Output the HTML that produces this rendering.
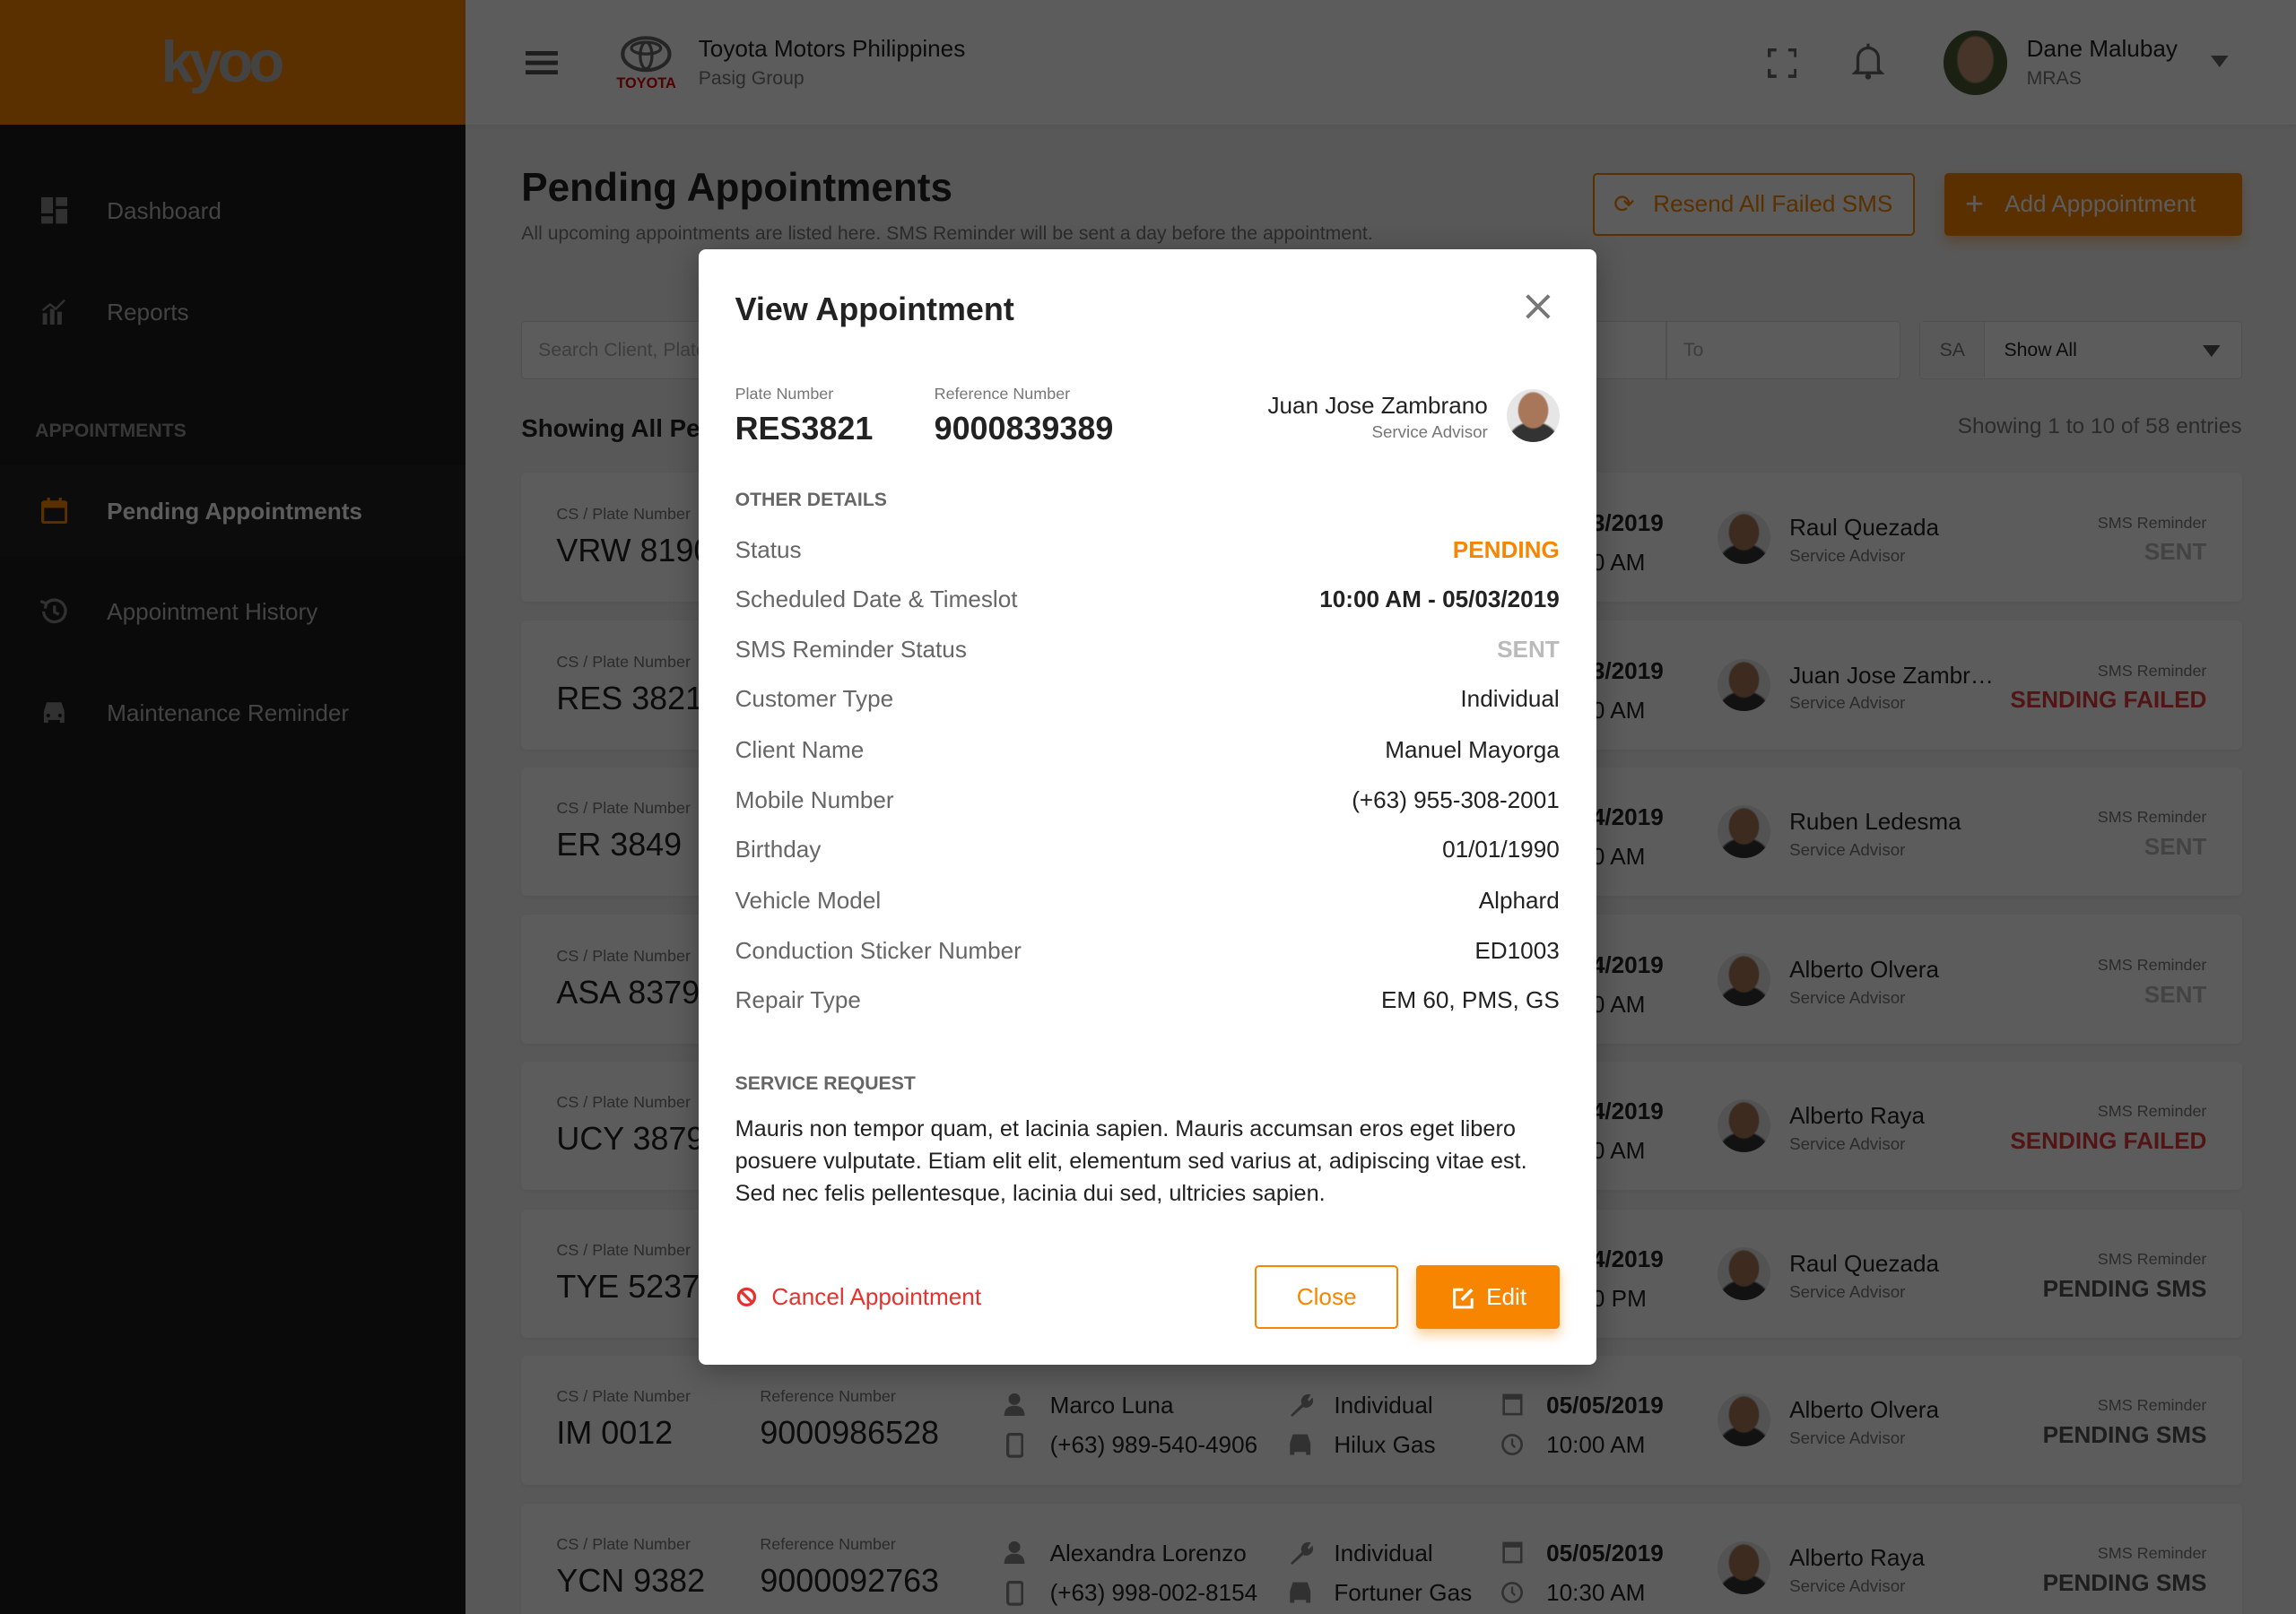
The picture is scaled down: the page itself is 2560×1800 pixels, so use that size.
<!DOCTYPE html>
<html><head><meta charset="utf-8">
<style>
*{margin:0;padding:0;box-sizing:border-box}
html,body{width:2560px;height:1800px;overflow:hidden;background:#f4f4f4}
#root{position:relative;width:1568px;height:1103px;zoom:1.63265;font-family:"Liberation Sans",sans-serif;color:#222;overflow:hidden;background:#f4f4f4}
.a{position:absolute;white-space:nowrap;line-height:1}
.side{position:absolute;left:0;top:0;width:318px;height:1103px;background:#1c1c1c}
.brand{position:absolute;left:0;top:0;width:318px;height:85px;background:#f88500}
.top{position:absolute;left:318px;top:0;width:1250px;height:85px;background:#fff;box-shadow:0 1px 3px rgba(0,0,0,.08)}
.card{position:absolute;left:356px;width:1175px;height:88px;background:#fff;border-radius:4px;box-shadow:0 1px 3px rgba(0,0,0,.06)}
.lbl{font-size:11px;color:#777}
.plate{font-size:22px;color:#222}
.av{position:absolute;border-radius:50%;background:radial-gradient(ellipse 30% 36% at 50% 40%,#a8775a 0 90%,transparent 100%),radial-gradient(ellipse 50% 40% at 50% 100%,#333 0 90%,transparent 100%),#e6e6e6}
.ov{position:absolute;left:0;top:0;width:1568px;height:1103px;background:rgba(0,0,0,.64)}
.modal{position:absolute;left:477px;top:170px;width:613px;height:762px;background:#fff;border-radius:5px;box-shadow:0 4px 20px rgba(0,0,0,.3)}
.row{position:absolute;left:25px;width:563px;height:20px;font-size:16px}
.row .l{position:absolute;left:0;color:#666}
.row .v{position:absolute;right:0;color:#222}
.box{position:absolute;border:1px solid #ddd;border-radius:3px;background:#fff;height:40px;top:219px}
</style></head><body><div id="root">

<div class="side">
 <div class="brand"><div class="a" style="left:110px;top:22px;font-size:40px;font-weight:bold;color:#bbb;letter-spacing:-3px">kyoo</div></div>
 <svg class="a" style="left:28px;top:135px" width="18" height="18"><rect x="0" y="0" width="8" height="11" fill="#888"/><rect x="10" y="0" width="8" height="6" fill="#888"/><rect x="10" y="8" width="8" height="10" fill="#888"/><rect x="0" y="13" width="8" height="5" fill="#888"/></svg>
 <div class="a" style="left:73px;top:136px;font-size:16px;color:#bbb">Dashboard</div>
 <svg class="a" style="left:28px;top:204px" width="18" height="18"><rect x="1" y="10" width="3" height="8" fill="#888"/><rect x="6" y="7" width="3" height="11" fill="#888"/><rect x="11" y="9" width="3" height="9" fill="#888"/><path d="M1 8 L6 4 L10 7 L16 1" stroke="#888" stroke-width="1.5" fill="none"/></svg>
 <div class="a" style="left:73px;top:205px;font-size:16px;color:#bbb">Reports</div>
 <div class="a" style="left:24px;top:288px;font-size:13px;color:#999;font-weight:bold">APPOINTMENTS</div>
 <div class="a" style="left:0;top:318px;width:318px;height:62px;background:#222"></div>
 <svg class="a" style="left:28px;top:340px" width="18" height="18"><rect x="1" y="3" width="16" height="14" rx="1" fill="none" stroke="#f88500" stroke-width="2"/><rect x="1" y="3" width="16" height="4" fill="#f88500"/><rect x="4" y="0" width="2" height="4" fill="#f88500"/><rect x="12" y="0" width="2" height="4" fill="#f88500"/></svg>
 <div class="a" style="left:73px;top:341px;font-size:16px;color:#fff;font-weight:bold">Pending Appointments</div>
 <svg class="a" style="left:26px;top:407px" width="22" height="22"><path d="M4 11 A7.5 7.5 0 1 0 6 5.5" stroke="#888" stroke-width="2" fill="none"/><path d="M2 4 L6 5.5 L5 9" stroke="#888" stroke-width="2" fill="none"/><path d="M11.5 7 V11.5 L14.5 13" stroke="#888" stroke-width="2" fill="none"/></svg>
 <div class="a" style="left:73px;top:410px;font-size:16px;color:#bbb">Appointment History</div>
 <svg class="a" style="left:27px;top:478px" width="20" height="18"><path d="M3 8 L5 2 H15 L17 8 V16 H14 V14 H6 V16 H3 Z" fill="#888"/><circle cx="6" cy="11" r="1.3" fill="#1c1c1c"/><circle cx="14" cy="11" r="1.3" fill="#1c1c1c"/></svg>
 <div class="a" style="left:73px;top:479px;font-size:16px;color:#bbb">Maintenance Reminder</div>
</div>

<div class="top">
 <svg class="a" style="left:41px;top:35px" width="22" height="16"><rect y="0" width="22" height="3" fill="#555"/><rect y="6.5" width="22" height="3" fill="#555"/><rect y="13" width="22" height="3" fill="#555"/></svg>
 <svg class="a" style="left:105px;top:24px" width="36" height="26"><ellipse cx="18" cy="13" rx="16" ry="11" fill="none" stroke="#666" stroke-width="2.5"/><ellipse cx="18" cy="9" rx="10" ry="4" fill="none" stroke="#666" stroke-width="2"/><ellipse cx="18" cy="14" rx="4" ry="9" fill="none" stroke="#666" stroke-width="2"/></svg>
 <div class="a" style="left:103px;top:52px;font-size:10px;font-weight:bold;color:#d00">TOYOTA</div>
 <div class="a" style="left:159px;top:25px;font-size:16px;color:#222">Toyota Motors Philippines</div>
 <div class="a" style="left:159px;top:47px;font-size:13px;color:#777">Pasig Group</div>
 <svg class="a" style="left:889px;top:33px" width="20" height="20"><path d="M1 6V1H6M14 1H19V6M19 14V19H14M6 19H1V14" stroke="#666" stroke-width="2.2" fill="none"/></svg>
 <svg class="a" style="left:947px;top:29px" width="22" height="26"><path d="M4 19 V11 A7 7 0 0 1 18 11 V19 L20 21 H2 Z" fill="none" stroke="#666" stroke-width="2"/><circle cx="11" cy="23.5" r="2" fill="#666"/><rect x="10" y="1" width="2" height="3" fill="#666"/></svg>
 <div class="av" style="left:1009px;top:21px;width:44px;height:44px;background:radial-gradient(ellipse 30% 38% at 50% 45%,#c79476 0 90%,transparent 100%),#4a5a34"></div>
 <div class="a" style="left:1066px;top:25px;font-size:16px;color:#222">Dane Malubay</div>
 <div class="a" style="left:1066px;top:47px;font-size:13px;color:#777">MRAS</div>
 <svg class="a" style="left:1192px;top:38px" width="12" height="8"><path d="M0 0H12L6 8Z" fill="#666"/></svg>
</div>

<div class="a" style="left:356px;top:115px;font-size:27px;font-weight:bold;color:#222">Pending Appointments</div>
<div class="a" style="left:356px;top:153px;font-size:13px;color:#777">All upcoming appointments are listed here. SMS Reminder will be sent a day before the appointment.</div>
<div class="a" style="left:1088px;top:118px;width:220px;height:43px;border:1.5px solid #f88500;border-radius:3px;background:#fff"></div>
<div class="a" style="left:1102px;top:131px;font-size:17px;color:#f88500">⟳</div>
<div class="a" style="left:1129px;top:131px;font-size:16px;color:#f88500">Resend All Failed SMS</div>
<div class="a" style="left:1328px;top:118px;width:203px;height:43px;background:#f88500;border-radius:3px;box-shadow:0 4px 8px rgba(248,133,0,.4)"></div>
<div class="a" style="left:1342px;top:128px;font-size:22px;color:#fff">+</div>
<div class="a" style="left:1369px;top:131px;font-size:16px;color:#fff">Add Apppointment</div>

<div class="box" style="left:356px;width:320px"><div class="a" style="left:11px;top:13px;font-size:13px;color:#aaa">Search Client, Plate</div></div>
<div class="box" style="left:920px;width:378px"><div class="a" style="left:217px;top:0;width:1px;height:40px;background:#ddd"></div><div class="a" style="left:229px;top:13px;font-size:13px;color:#aaa">To</div></div>
<div class="box" style="left:1311px;width:220px;background:#fff"><div class="a" style="left:0;top:0;width:44px;height:38px;background:#f7f7f7;border-right:1px solid #ddd"></div><div class="a" style="left:13px;top:13px;font-size:13px;color:#777">SA</div><div class="a" style="left:57px;top:13px;font-size:13px;color:#222">Show All</div><svg class="a" style="left:193px;top:16px" width="12" height="8"><path d="M0 0H12L6 8Z" fill="#555"/></svg></div>
<div class="a" style="left:356px;top:284px;font-size:17px;font-weight:bold;color:#222">Showing All Pending Appointments</div>
<div class="a" style="left:1250px;top:284px;width:281px;text-align:right;font-size:15px;color:#777">Showing 1 to 10 of 58 entries</div>

<div id="cards"></div>
<script>
var d=[["VRW 8190","9000839382","Raul Quezada","SENT","#bbb","05/03/2019","10:00 AM"],
["RES 3821","9000839389","Juan Jose Zambr…","SENDING FAILED","#e03a3a","05/03/2019","10:00 AM"],
["ER 3849","9000839390","Ruben Ledesma","SENT","#bbb","05/04/2019","10:00 AM"],
["ASA 8379","9000839391","Alberto Olvera","SENT","#bbb","05/04/2019","10:00 AM"],
["UCY 3879","9000839392","Alberto Raya","SENDING FAILED","#e03a3a","05/04/2019","10:00 AM"],
["TYE 5237","9000839393","Raul Quezada","PENDING SMS","#555","05/04/2019","01:00 PM"],
["IM 0012","9000986528","Alberto Olvera","PENDING SMS","#555","05/05/2019","10:00 AM","Marco Luna","(+63) 989-540-4906","Hilux Gas"],
["YCN 9382","9000092763","Alberto Raya","PENDING SMS","#555","05/05/2019","10:30 AM","Alexandra Lorenzo","(+63) 998-002-8154","Fortuner Gas"]];
var h="",tops=[323,424,524,625,725,826,926,1027];
d.forEach(function(r,i){var t=tops[i];
h+='<div class="card" style="top:'+t+'px">'+
'<div class="a lbl" style="left:24px;top:23px">CS / Plate Number</div>'+
'<div class="a plate" style="left:24px;top:42px">'+r[0]+'</div>'+
'<div class="a lbl" style="left:163px;top:23px">Reference Number</div>'+
'<div class="a plate" style="left:163px;top:42px">'+r[1]+'</div>'+
'<svg class="a" style="left:329px;top:25px" width="16" height="16"><circle cx="8" cy="4.5" r="4" fill="#888"/><path d="M1 16 Q1 9 8 9 Q15 9 15 16Z" fill="#888"/></svg>'+
'<div class="a" style="left:361px;top:26px;font-size:16px">'+(r[7]||"Manuel Mayorga")+'</div>'+
'<svg class="a" style="left:331px;top:53px" width="12" height="17"><rect x="1" y="1" width="10" height="15" rx="1.5" fill="none" stroke="#888" stroke-width="2"/></svg>'+
'<div class="a" style="left:361px;top:53px;font-size:16px">'+(r[8]||"(+63) 955-308-2001")+'</div>'+
'<svg class="a" style="left:523px;top:25px" width="18" height="18"><path d="M3 16 L11 8 A4 4 0 0 1 15 2 L13 5 L15 7 L17 5 A4 4 0 0 1 11 9 Z" fill="#888" stroke="#888" stroke-width="1.5"/></svg>'+
'<div class="a" style="left:555px;top:26px;font-size:16px">Individual</div>'+
'<svg class="a" style="left:523px;top:53px" width="18" height="16"><path d="M2 7 L4 1 H14 L16 7 V15 H13 V13 H5 V15 H2 Z" fill="#888"/></svg>'+
'<div class="a" style="left:555px;top:53px;font-size:16px">'+(r[9]||"Alphard")+'</div>'+
'<svg class="a" style="left:670px;top:24px" width="14" height="17"><rect x="1" y="3" width="12" height="13" fill="none" stroke="#888" stroke-width="1.6"/><rect x="1" y="3" width="12" height="3" fill="#888"/></svg>'+
'<div class="a" style="left:700px;top:26px;font-size:16px;font-weight:bold">'+r[5]+'</div>'+
'<svg class="a" style="left:669px;top:53px" width="16" height="16"><circle cx="8" cy="8" r="6.5" fill="none" stroke="#888" stroke-width="1.6"/><path d="M8 4V8L10 10" stroke="#888" stroke-width="1.4" fill="none"/></svg>'+
'<div class="a" style="left:700px;top:53px;font-size:16px">'+r[6]+'</div>'+
'<div class="av" style="left:817px;top:26px;width:36px;height:36px"></div>'+
'<div class="a" style="left:866px;top:29px;font-size:16px">'+r[2]+'</div>'+
'<div class="a" style="left:866px;top:51px;font-size:11.5px;color:#777">Service Advisor</div>'+
'<div class="a lbl" style="right:24px;top:29px">SMS Reminder</div>'+
'<div class="a" style="right:24px;top:46px;font-size:16px;font-weight:bold;color:'+r[4]+'">'+r[3]+'</div>'+
'</div>';});
document.getElementById("cards").innerHTML=h;
</script>

<div class="ov"></div>

<div class="modal">
 <div class="a" style="left:25px;top:30px;font-size:22px;font-weight:bold;color:#222">View Appointment</div>
 <svg class="a" style="left:565px;top:31px" width="17" height="17"><path d="M1 1L16 16M16 1L1 16" stroke="#777" stroke-width="2.4"/></svg>
 <div class="a lbl" style="left:25px;top:94px">Plate Number</div>
 <div class="a" style="left:25px;top:112px;font-size:22px;font-weight:bold">RES3821</div>
 <div class="a lbl" style="left:161px;top:94px">Reference Number</div>
 <div class="a" style="left:161px;top:112px;font-size:22px;font-weight:bold">9000839389</div>
 <div class="a" style="right:74px;top:99px;font-size:16px">Juan Jose Zambrano</div>
 <div class="a" style="right:74px;top:120px;font-size:11.5px;color:#777">Service Advisor</div>
 <div class="av" style="left:552px;top:96px;width:36px;height:36px"></div>
 <div class="a" style="left:25px;top:165px;font-size:13px;font-weight:bold;color:#666">OTHER DETAILS</div>
 <div class="row" style="top:196px"><span class="l">Status</span><span class="v" style="color:#f88500;font-weight:bold">PENDING</span></div>
 <div class="row" style="top:230px"><span class="l">Scheduled Date &amp; Timeslot</span><span class="v" style="font-weight:bold">10:00 AM - 05/03/2019</span></div>
 <div class="row" style="top:264px"><span class="l">SMS Reminder Status</span><span class="v" style="color:#bbb;font-weight:bold">SENT</span></div>
 <div class="row" style="top:298px"><span class="l">Customer Type</span><span class="v">Individual</span></div>
 <div class="row" style="top:333px"><span class="l">Client Name</span><span class="v">Manuel Mayorga</span></div>
 <div class="row" style="top:367px"><span class="l">Mobile Number</span><span class="v">(+63) 955-308-2001</span></div>
 <div class="row" style="top:401px"><span class="l">Birthday</span><span class="v">01/01/1990</span></div>
 <div class="row" style="top:436px"><span class="l">Vehicle Model</span><span class="v">Alphard</span></div>
 <div class="row" style="top:470px"><span class="l">Conduction Sticker Number</span><span class="v">ED1003</span></div>
 <div class="row" style="top:504px"><span class="l">Repair Type</span><span class="v">EM 60, PMS, GS</span></div>
 <div class="a" style="left:25px;top:564px;font-size:13px;font-weight:bold;color:#666">SERVICE REQUEST</div>
 <div style="position:absolute;left:25px;top:591px;width:565px;font-size:15.5px;line-height:22px;color:#222">Mauris non tempor quam, et lacinia sapien. Mauris accumsan eros eget libero posuere vulputate. Etiam elit elit, elementum sed varius at, adipiscing vitae est. Sed nec felis pellentesque, lacinia dui sed, ultricies sapien.</div>
 <svg class="a" style="left:26px;top:709px" width="14" height="14"><circle cx="7" cy="7" r="5.5" fill="none" stroke="#e5322f" stroke-width="2"/><path d="M3 3L11 11" stroke="#e5322f" stroke-width="2"/></svg>
 <div class="a" style="left:50px;top:708px;font-size:16px;color:#e5322f">Cancel Appointment</div>
 <div class="a" style="left:380px;top:694px;width:98px;height:44px;border:1.5px solid #f88500;border-radius:3px"></div>
 <div class="a" style="left:380px;top:708px;width:98px;text-align:center;font-size:16px;color:#f88500">Close</div>
 <div class="a" style="left:490px;top:694px;width:98px;height:44px;background:#f88500;border-radius:3px;box-shadow:0 4px 8px rgba(248,133,0,.4)"></div>
 <svg class="a" style="left:515px;top:709px" width="15" height="15"><path d="M7 2H1V14H13V8" stroke="#fff" stroke-width="1.8" fill="none"/><path d="M6 9L13 2" stroke="#fff" stroke-width="2.2"/></svg>
 <div class="a" style="left:538px;top:708px;font-size:16px;color:#fff">Edit</div>
</div>

</div></body></html>
